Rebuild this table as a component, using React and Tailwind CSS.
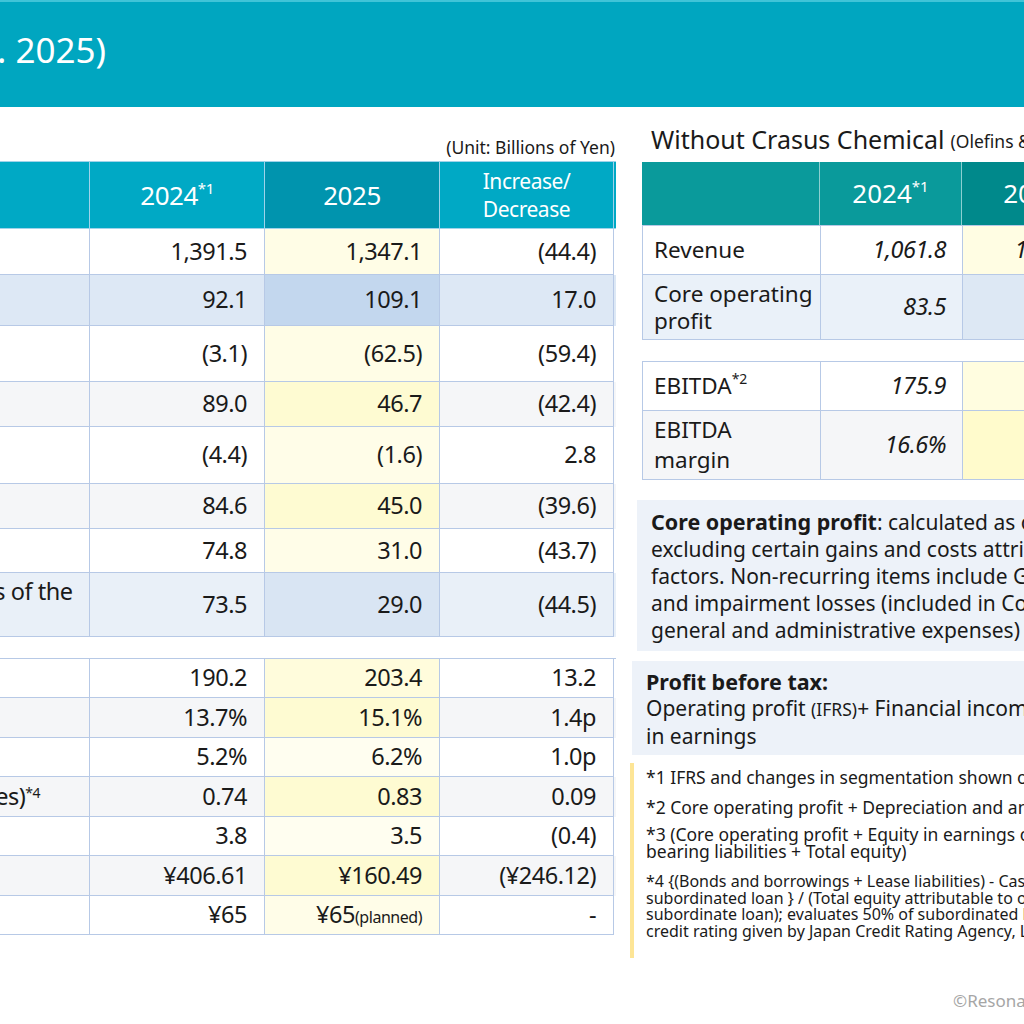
import React from 'react';

const mainRows = [
  { label: ['Revenue'], a: '1,391.5', b: '1,347.1', c: '(44.4)', h: 'h-[46px]', bg: 'bg-white', bgB: 'bg-[#fffde6]' },
  { label: ['Core operating profit'], a: '92.1', b: '109.1', c: '17.0', h: 'h-[51px]', bg: 'bg-[#dde8f5]', bgB: 'bg-[#c3d7ee]' },
  { label: ['Non-recurring items'], a: '(3.1)', b: '(62.5)', c: '(59.4)', h: 'h-[56px]', bg: 'bg-white', bgB: 'bg-[#fffde6]' },
  { label: ['Operating profit (IFRS)'], a: '89.0', b: '46.7', c: '(42.4)', h: 'h-[45px]', bg: 'bg-[#f5f6f8]', bgB: 'bg-[#fefbd2]' },
  { label: ['Financial income/costs'], a: '(4.4)', b: '(1.6)', c: '2.8', h: 'h-[57px]', bg: 'bg-white', bgB: 'bg-[#fffde8]' },
  { label: ['Profit before tax'], a: '84.6', b: '45.0', c: '(39.6)', h: 'h-[45px]', bg: 'bg-[#f5f6f8]', bgB: 'bg-[#fefbd2]' },
  { label: ['Profit'], a: '74.8', b: '31.0', c: '(43.7)', h: 'h-[44px]', bg: 'bg-white', bgB: 'bg-[#fffde8]' },
  { label: ['Profit attributable to owners of the', 'parent'], a: '73.5', b: '29.0', c: '(44.5)', h: 'h-[64px]', bg: 'bg-[#e9f0f8]', bgB: 'bg-[#d9e5f3]', ml: '-ml-[294px]' },
];

const kpiRows = [
  { label: ['EBITDA'], sup: '*2', a: '190.2', b: '203.4', c: '13.2', bg: 'bg-white', bgB: 'bg-[#fffcdc]' },
  { label: ['EBITDA margin'], a: '13.7%', b: '15.1%', c: '1.4p', bg: 'bg-[#f5f6f8]', bgB: 'bg-[#fefbd2]' },
  { label: ['ROIC'], sup: '*3', a: '5.2%', b: '6.2%', c: '1.0p', bg: 'bg-white', bgB: 'bg-[#fffef0]' },
  { label: ['Net D/E ratio (times)'], sup: '*4', a: '0.74', b: '0.83', c: '0.09', bg: 'bg-[#f5f6f8]', bgB: 'bg-[#fefbd2]', ml: '-ml-[188px]' },
  { label: ['Net debt / EBITDA'], a: '3.8', b: '3.5', c: '(0.4)', bg: 'bg-white', bgB: 'bg-[#fffef0]' },
  { label: ['EPS'], a: '¥406.61', b: '¥160.49', c: '(¥246.12)', bg: 'bg-[#f5f6f8]', bgB: 'bg-[#fefbd2]' },
  { label: ['Dividend per share'], a: '¥65', b: '¥65', note: '(planned)', c: '-', bg: 'bg-white', bgB: 'bg-[#fffde8]' },
];

const line = 'border-[#b7c9e6]';

// Number cell, right aligned like the slide
const Num = ({ children, className = '' }) => (
  <div className={`flex items-center justify-end pr-[17px] border-r border-b ${line} ${className}`}>
    {children}
  </div>
);

// Labels sit mostly left of the visible area
const Label = ({ row }) => (
  <div className={`overflow-hidden flex items-center border-r border-b ${line}`}>
    <div className={`shrink-0 whitespace-nowrap leading-[27px] ${row.ml || '-ml-[320px]'}`}>
      {row.label.map((t, i) => (
        <div key={i}>
          {t}
          {i === 0 && row.sup && <sup className="text-[14px]">{row.sup}</sup>}
        </div>
      ))}
    </div>
  </div>
);

const ResultsTable = () => (
  <div className="text-[23.5px] tracking-[-0.02em]">
    <div className="grid grid-cols-[90px_175px_175px_174px] h-[68px] bg-[#00a9c5] text-white border-t border-b border-[#9fd3ea]">
      <div className="border-r border-[#9fd3ea]" />
      <div className="flex items-center justify-center border-r border-[#9fd3ea] text-[26px]">
        2024<sup className="text-[15px]">*1</sup>
      </div>
      <div className="flex items-center justify-center border-r border-[#9fd3ea] bg-[#0094ae] text-[26px]">2025</div>
      <div className="flex flex-col items-center justify-center border-r border-[#9fd3ea] text-[21px] leading-[28px]">
        <span>Increase/</span>
        <span>Decrease</span>
      </div>
    </div>
    {mainRows.map((row, i) => (
      <div key={i} className={`grid grid-cols-[90px_175px_175px_174px] ${row.h} ${row.bg}`}>
        <Label row={row} />
        <Num>{row.a}</Num>
        <Num className={row.bgB}>{row.b}</Num>
        <Num>{row.c}</Num>
      </div>
    ))}
  </div>
);

const KpiTable = () => (
  <div className={`mt-[21px] border-t ${line} text-[23.5px] tracking-[-0.02em]`}>
    {kpiRows.map((row, i) => (
      <div key={i} className={`grid grid-cols-[90px_175px_175px_174px] ${i % 2 ? 'h-[40px]' : 'h-[39px]'} ${row.bg}`}>
        <Label row={row} />
        <Num>{row.a}</Num>
        <Num className={row.bgB}>
          {row.b}
          {row.note && <span className="text-[16px] pt-[3px]">{row.note}</span>}
        </Num>
        <Num>{row.c}</Num>
      </div>
    ))}
  </div>
);

const SubCell = ({ children, className = '' }) => (
  <div className={`flex items-center justify-end pr-[16px] border-r border-b ${line} italic text-[23.5px] tracking-[-0.02em] ${className}`}>
    {children}
  </div>
);

const SubTable = () => (
  <div className="ml-[12px] text-[22.5px]">
    <div className={`grid grid-cols-[178px_142px_142px] h-[64px] bg-[#0a9a9b] text-white text-[26px] border-b ${line}`}>
      <div className="border-r border-[#8ccfd0]" />
      <div className="flex items-center justify-center border-r border-[#8ccfd0]">
        2024<sup className="text-[15px]">*1</sup>
      </div>
      <div className="flex items-center justify-center bg-[#00898b]">2025</div>
    </div>
    <div className={`grid grid-cols-[178px_142px_142px] h-[49px] bg-white border-l ${line}`}>
      <div className={`flex items-center pl-[11px] border-r border-b ${line}`}>Revenue</div>
      <SubCell>1,061.8</SubCell>
      <SubCell className="bg-[#fffde3]">1,032.4</SubCell>
    </div>
    <div className={`grid grid-cols-[178px_142px_142px] h-[65px] bg-[#eaf1f9] border-l ${line}`}>
      <div className={`flex flex-col justify-center pl-[11px] leading-[27px] border-r border-b ${line}`}>
        <span>Core operating</span>
        <span>profit</span>
      </div>
      <SubCell>83.5</SubCell>
      <SubCell className="bg-[#dde8f4]">96.8</SubCell>
    </div>

    <div className={`mt-[21px] grid grid-cols-[178px_142px_142px] h-[50px] bg-white border-l border-t ${line}`}>
      <div className={`flex items-center pl-[11px] border-r border-b ${line}`}>
        EBITDA<sup className="text-[14px]">*2</sup>
      </div>
      <SubCell>175.9</SubCell>
      <SubCell className="bg-[#fffde0]">180.2</SubCell>
    </div>
    <div className={`grid grid-cols-[178px_142px_142px] h-[69px] bg-[#f5f6f8] border-l ${line}`}>
      <div className={`flex flex-col justify-center pl-[11px] leading-[30px] border-r border-b ${line}`}>
        <span>EBITDA</span>
        <span>margin</span>
      </div>
      <SubCell>16.6%</SubCell>
      <SubCell className="bg-[#fffbcc]">17.5%</SubCell>
    </div>
  </div>
);

const Nowrap = ({ children, className = '' }) => (
  <div className={`whitespace-nowrap ${className}`}>{children}</div>
);

export default function App() {
  return (
    <div className="w-[1024px] h-[1024px] overflow-hidden bg-white text-[#1a1a1a] font-['Noto_Sans','Open_Sans',sans-serif]">
      <header className="h-[107px] bg-[#00a6c0] border-t-2 border-[#40c4d8] flex items-center">
        <div className="w-[106px] shrink-0 flex justify-end overflow-hidden">
          <h1 className="shrink-0 whitespace-nowrap text-white text-[35px] pb-[8px]">
            Consolidated Financial Results (Jan. - Dec. 2025)
          </h1>
        </div>
      </header>

      <div className="flex">
        <section className="w-[616px] shrink-0">
          <div className="h-[54px] flex items-end justify-end pb-[1px] pr-[1px] text-[17.5px]">
            (Unit: Billions of Yen)
          </div>
          <ResultsTable />
          <KpiTable />
        </section>

        <aside className="ml-[14px] w-[480px] shrink-0">
          <div className="h-[55px] flex items-center pl-[21px] pt-[10px] whitespace-nowrap">
            <span className="text-[25px]">Without Crasus Chemical</span>
            <span className="text-[17.5px] ml-[6px] pt-[4px]">(Olefins &amp; Aromatics)</span>
          </div>
          <SubTable />

          <div className="ml-[7px] mt-[20px] h-[151px] bg-[#edf2f9] pl-[14px] pt-[8px] text-[21px] leading-[27px]">
            <Nowrap>
              <b className="text-[21.5px]">Core operating profit</b>: calculated as operating profit (IFRS)
            </Nowrap>
            <Nowrap>excluding certain gains and costs attributable to non-recurring</Nowrap>
            <Nowrap>factors. Non-recurring items include Gains on sale of fixed assets</Nowrap>
            <Nowrap>and impairment losses (included in Cost of sales and Selling,</Nowrap>
            <Nowrap>general and administrative expenses)</Nowrap>
          </div>

          <div className="ml-[2px] mt-[10px] h-[94px] bg-[#edf2f9] pl-[14px] pt-[7px] text-[21px] leading-[27px]">
            <Nowrap className="font-bold text-[21.5px]">Profit before tax:</Nowrap>
            <Nowrap>
              Operating profit <span className="text-[17.5px]">(IFRS)</span>+ Financial income/costs + Equity
            </Nowrap>
            <Nowrap>in earnings</Nowrap>
          </div>

          <div className="mt-[8px] h-[195px] border-l-4 border-[#fde596] pl-[12px] pt-[4px]">
            <Nowrap className="text-[17.5px] leading-[20px]">
              *1 IFRS and changes in segmentation shown on a retroactive basis
            </Nowrap>
            <Nowrap className="mt-[10px] text-[17.5px] leading-[20px]">
              *2 Core operating profit + Depreciation and amortization
            </Nowrap>
            <div className="mt-[9px] text-[17.5px] leading-[17px]">
              <Nowrap>*3 (Core operating profit + Equity in earnings of affiliates) / (Average interest-</Nowrap>
              <Nowrap>bearing liabilities + Total equity)</Nowrap>
            </div>
            <div className="mt-[13px] text-[16px] leading-[16.7px]">
              <Nowrap>*4 {'{'}(Bonds and borrowings + Lease liabilities) - Cash and cash equivalents - 50% of</Nowrap>
              <Nowrap>subordinated loan {'}'} / (Total equity attributable to owners of the parent + 50% of</Nowrap>
              <Nowrap>subordinate loan); evaluates 50% of subordinated loan as equity, based on the</Nowrap>
              <Nowrap>credit rating given by Japan Credit Rating Agency, Ltd.</Nowrap>
            </div>
          </div>

          <div className="mt-[32px] pl-[323px] text-[17px] leading-[22px] text-[#a6a6a6] whitespace-nowrap">
            ©Resonac Holdings Corporation
          </div>
        </aside>
      </div>
    </div>
  );
}
